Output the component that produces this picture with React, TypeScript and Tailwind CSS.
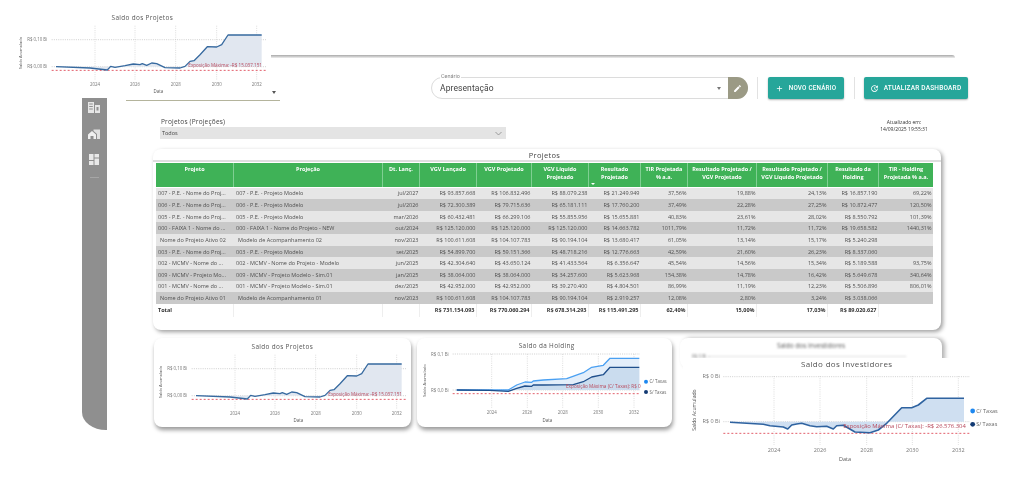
import React from "react";
import { MdAdd, MdEdit, MdUpdate } from "react-icons/md";

type Pt = [number, number];

const rows: string[][] = [
  ["007 - P.E. - Nome do Proj...", "007 - P.E. - Projeto Modelo", "jul/2027", "R$ 93.857.668", "R$ 106.832.496", "R$ 88.079.238", "R$ 21.249.949", "37,56%", "19,88%", "24,13%", "R$ 16.857.190", "69,22%"],
  ["006 - P.E. - Nome do Proj...", "006 - P.E. - Projeto Modelo", "jul/2026", "R$ 72.300.389", "R$ 79.715.636", "R$ 65.181.111", "R$ 17.760.200", "37,49%", "22,28%", "27,25%", "R$ 10.872.477", "120,50%"],
  ["005 - P.E. - Nome do Proj...", "005 - P.E. - Projeto Modelo", "mar/2026", "R$ 60.432.481", "R$ 66.299.106", "R$ 55.855.956", "R$ 15.655.881", "40,83%", "23,61%", "28,02%", "R$ 8.550.792", "101,39%"],
  ["000 - FAIXA 1 - Nome do ...", "000 - FAIXA 1 - Nome do Projeto - NEW", "out/2024", "R$ 125.120.000", "R$ 125.120.000", "R$ 125.120.000", "R$ 14.663.782", "1011,79%", "11,72%", "11,72%", "R$ 19.658.582", "1440,31%"],
  [" Nome do Projeto Ativo 02", " Modelo de Acompanhamento 02", "nov/2023", "R$ 100.611.608", "R$ 104.107.783", "R$ 90.194.104", "R$ 13.680.417", "61,05%", "13,14%", "15,17%", "R$ 5.240.298", ""],
  ["003 - P.E. - Nome do Proj...", "003 - P.E. - Projeto Modelo", "set/2025", "R$ 54.899.700", "R$ 59.151.366", "R$ 48.718.216", "R$ 12.776.663", "42,59%", "21,60%", "26,23%", "R$ 8.337.060", ""],
  ["002 - MCMV - Nome do ...", "002 - MCMV - Nome do Projeto - Modelo", "jun/2025", "R$ 42.304.640", "R$ 43.650.124", "R$ 41.433.564", "R$ 6.356.647", "45,54%", "14,56%", "15,34%", "R$ 5.189.588", "93,75%"],
  ["009 - MCMV - Projeto Mo...", "009 - MCMV - Projeto Modelo - Sim.01", "jan/2025", "R$ 38.064.000", "R$ 38.064.000", "R$ 34.257.600", "R$ 5.623.968", "154,38%", "14,78%", "16,42%", "R$ 5.649.678", "340,64%"],
  ["001 - MCMV - Nome do ...", "001 - MCMV - Projeto Modelo - Sim.01", "dez/2025", "R$ 42.952.000", "R$ 42.952.000", "R$ 39.270.400", "R$ 4.804.501", "86,99%", "11,19%", "12,23%", "R$ 5.506.896", "806,01%"],
  [" Nome do Projeto Ativo 01", " Modelo de Acompanhamento 01", "nov/2023", "R$ 100.611.608", "R$ 104.107.783", "R$ 90.194.104", "R$ 2.919.257", "12,08%", "2,80%", "3,24%", "R$ 3.038.066", ""],
];
const total = ["Total", "", "", "R$ 731.154.093", "R$ 770.060.294", "R$ 678.314.293", "R$ 115.491.295", "62,40%", "15,00%", "17,03%", "R$ 89.020.627", ""];
const headers = ["Projeto", "Projeção", "Dt. Lanç.", "VGV Lançado", "VGV Projetado", "VGV Líquido\nProjetado", "Resultado\nProjetado", "TIR Projetada\n% a.a.", "Resultado Projetado /\nVGV Projetado", "Resultado Projetado /\nVGV Líquido Projetado", "Resultado da\nHolding", "TIR - Holding\nProjetada % a.a."];
const gridCols = "grid grid-cols-[78px_149px_37px_57px_55px_57px_52px_47px_69px_71px_51px_54px]";

const projectLine: Pt[] = [[168,201],[270,205],[322,211],[332,200],[345,203],[375,198],[400,193],[420,195],[427,192],[440,197],[455,190],[470,192],[495,204],[540,205],[555,200],[570,185],[582,183],[600,165],[622,141],[650,142],[665,135],[684,106],[785,106]];
const holdingLight: Pt[] = [[140,180],[240,180],[295,180],[320,165],[345,156],[365,157],[370,153],[400,150],[470,146],[495,137],[520,128],[545,112],[580,106],[600,85],[688,85]];
const holdingDark: Pt[] = [[140,180],[240,181],[295,184],[320,175],[345,168],[365,169],[370,165],[400,165],[490,164],[520,155],[545,141],[580,134],[600,112],[688,112]];
const investorLine: Pt[] = [[180,277],[280,283],[300,287],[340,291],[353,297],[365,285],[380,282],[395,280],[420,287],[440,290],[470,289],[490,297],[500,287],[520,286],[555,306],[600,308],[625,300],[650,280],[695,233],[725,233],[745,225],[770,205],[882,205]];

type ChartProps = {
  w: number; h: number; dx: number; dy: number; title: string; titleZ: Pt; titleSize: number;
  yLabels: { z: number; t: string }[]; labelEnd: number; gridL: number; gridR: number;
  years: number[]; vTop: number; vBottom: number; yearY: number; dataXY: Pt; axisX: number; axisY: number;
  redY: number; redText: string; redZ: Pt; redSize: number; tick: number; stroke: number;
  areas: { pts: Pt[]; base: number; fill: string }[];
  lines: { pts: Pt[]; color: string }[];
  legend?: { x: number; y: number; color: string; t: string }[];
};

function Chart(c: ChartProps) {
  const X = (z: number) => z / 3 - c.dx;
  const Y = (z: number) => z / 3 - c.dy;
  const P = (a: Pt[]) => a.map(([x, y]) => `${X(x).toFixed(1)},${Y(y).toFixed(1)}`).join(" ");
  const labels = ["2024", "2026", "2028", "2030", "2032"];
  return (
    <svg width={c.w} height={c.h} viewBox={`0 0 ${c.w} ${c.h}`} className="block" fontFamily="'Open Sans', sans-serif">
      <text x={X(c.titleZ[0])} y={Y(c.titleZ[1]) + 2.5} fontSize={c.titleSize} fill="#555" textAnchor="middle" letterSpacing="0.35">{c.title}</text>
      {c.years.map((z) => (
        <line key={z} x1={X(z)} x2={X(z)} y1={Y(c.vTop)} y2={Y(c.vBottom)} stroke="#d5d5d5" strokeWidth="0.8" strokeDasharray="1 1.2" />
      ))}
      {c.yLabels.map((l) => (
        <g key={l.z}>
          <line x1={X(c.gridL)} x2={X(c.gridR)} y1={Y(l.z)} y2={Y(l.z)} stroke="#c4c4c4" strokeWidth="0.8" strokeDasharray="1 1.2" />
          <text x={X(c.labelEnd)} y={Y(l.z) + 1.7} fontSize={c.tick} fill="#777" textAnchor="end">{l.t}</text>
        </g>
      ))}
      {c.areas.map((a, i) => (
        <polygon key={i} fill={a.fill} points={`${P(a.pts)} ${X(a.pts[a.pts.length - 1][0])},${Y(a.base)} ${X(a.pts[0][0])},${Y(a.base)}`} />
      ))}
      <line x1={X(c.gridL)} x2={X(c.gridR)} y1={Y(c.redY)} y2={Y(c.redY)} stroke="#e2606c" strokeWidth="1" strokeDasharray="2 2" />
      {c.lines.map((l, i) => (
        <polyline key={i} points={P(l.pts)} fill="none" stroke={l.color} strokeWidth={c.stroke} strokeLinejoin="round" />
      ))}
      <text x={X(c.redZ[0])} y={Y(c.redZ[1]) + 1.7} fontSize={c.redSize} fill="#b8475a">{c.redText}</text>
      {c.years.map((z, i) => (
        <text key={z} x={X(z)} y={Y(c.yearY) + 1.7} fontSize={c.tick} fill="#777" textAnchor="middle">{labels[i]}</text>
      ))}
      <text x={X(c.dataXY[0])} y={Y(c.dataXY[1]) + 1.7} fontSize={c.tick} fill="#555" textAnchor="middle">Data</text>
      <text transform={`translate(${X(c.axisX) + 1.5} ${Y(c.axisY)}) rotate(-90)`} fontSize={c.tick - 0.4} fill="#555" textAnchor="middle">Saldo Acumulado</text>
      {c.legend?.map((l) => (
        <g key={l.t}>
          <circle cx={X(l.x)} cy={Y(l.y)} r={c.tick === 5.5 ? 2.4 : 2} fill={l.color} />
          <text x={X(l.x) + 3.5} y={Y(l.y) + 1.7} fontSize={c.tick} fill="#666">{l.t}</text>
        </g>
      ))}
    </svg>
  );
}

function ProjectChart() {
  return (
    <Chart
      w={257} h={89} dx={14} dy={9.3} title="Saldo dos Projetos" titleZ={[427, 52]} titleSize={6.4}
      yLabels={[{ z: 120, t: "R$ 0,10 Bi" }, { z: 201, t: "R$ 0,00 Bi" }]} labelEnd={142} gridL={155} gridR={798}
      years={[285, 405, 527, 650, 770]} vTop={78} vBottom={240} yearY={255} dataXY={[475, 276]} axisX={62} axisY={160}
      redY={212} redText="Exposição Máxima: -R$ 15.037.151" redZ={[565, 197]} redSize={4.6} tick={4.4} stroke={1.3}
      areas={[{ pts: projectLine, base: 201, fill: "#e1e7f0" }]} lines={[{ pts: projectLine, color: "#36699f" }]}
    />
  );
}

function HoldingChart() {
  return (
    <Chart
      w={255} h={89} dx={7} dy={8} title="Saldo da Holding" titleZ={[410, 46]} titleSize={6.4}
      yLabels={[{ z: 72, t: "R$ 0,1 Bi" }, { z: 180, t: "R$ 0,0 Bi" }]} labelEnd={116} gridL={128} gridR={690}
      years={[245, 352, 458, 565, 672]} vTop={72} vBottom={235} yearY={248} dataXY={[412, 270]} axisX={44} axisY={152}
      redY={191} redText="Exposição Máxima (C/ Taxas): R$ 0" redZ={[468, 168]} redSize={4.7} tick={4.4} stroke={1.3}
      areas={[{ pts: holdingLight, base: 180, fill: "#e3eefa" }, { pts: holdingDark, base: 180, fill: "#cadcee" }]}
      lines={[{ pts: holdingLight, color: "#4aa0f2" }, { pts: holdingDark, color: "#1f4f8c" }]}
      legend={[{ x: 708, y: 155, color: "#1e88f0", t: "C/ Taxas" }, { x: 708, y: 186, color: "#123a73", t: "S/ Taxas" }]}
    />
  );
}

function InvestorChart() {
  return (
    <Chart
      w={335} h={110} dx={13} dy={28} title="Saldo dos Investidores" titleZ={[530, 104]} titleSize={8}
      yLabels={[{ z: 140, t: "R$ 0 Bi" }, { z: 275, t: "R$ 0 Bi" }]} labelEnd={150} gridL={160} gridR={900}
      years={[312, 450, 590, 727, 865]} vTop={138} vBottom={345} yearY={362} dataXY={[525, 388]} axisX={72} axisY={240}
      redY={310} redText="Exposição Máxima (C/ Taxas): -R$ 26.576.304" redZ={[520, 290]} redSize={5.9} tick={5.5} stroke={1.6}
      areas={[{ pts: investorLine, base: 275, fill: "#cfdff1" }]} lines={[{ pts: investorLine, color: "#2f63a0" }]}
      legend={[{ x: 908, y: 243, color: "#1e88f0", t: "C/ Taxas" }, { x: 908, y: 283, color: "#123a73", t: "S/ Taxas" }]}
    />
  );
}

function Sidebar() {
  return (
    <aside className="mt-[96px] ml-[82px] w-[24.5px] h-[334px] shrink-0 bg-[#8f8f8f] rounded-bl-[24px_18px] flex flex-col items-center pt-[6px] gap-[14px]">
      <svg width="12" height="11" viewBox="0 0 12 11" fill="#e6e6e6">
        <path d="M0 0h6v11H0z M1.2 1.5v1h3.6v-1z M1.2 4v1h3.6V4z M1.2 6.500v1h3.6v-1z" fillRule="evenodd" />
        <path d="M7 3h5v8H7z M8.500 5v3.500h2V5z" fillRule="evenodd" />
      </svg>
      <svg width="12" height="11" viewBox="0 0 12 11" fill="#f0f0f0" className="mt-[1px]">
        <path d="M0 11V6.500L4 3l4 3.500V11H5.500V8h-3v3z" />
        <path d="M5.500 1.500H12V11H9V6L5.500 3z" opacity=".85" />
      </svg>
      <svg width="10" height="11" viewBox="0 0 10 11" fill="#e8e8e8" className="mt-[1px]">
        <path d="M0 0h4.500v6H0z M5.500 0H10v3.500H5.500z M5.500 4.500H10V11H5.500z M0 7h4.500v4H0z" />
      </svg>
      <div className="w-[9px] h-[1px] bg-[#a6a6a6] -mt-[2px]" />
    </aside>
  );
}

function ScenarioBar() {
  return (
    <div className="mt-[19px] ml-[324.500px] flex items-center h-[22px]" style={{ fontFamily: "Roboto, sans-serif" }}>
      <div className="relative w-[316.500px] h-[22px] flex items-center rounded-full border border-[#dcdcdc] bg-white overflow-visible">
        <span className="absolute -top-[6px] left-[8px] bg-white px-[1px] text-[5.500px] leading-[8px] text-[#888]">Cenário</span>
        <span className="flex-1 pl-[8px] pt-[1px] text-[8.500px] tracking-[0.1px] text-[#444]">Apresentação</span>
        <span className="mr-[7px] w-0 h-0 border-x-[2.500px] border-x-transparent border-t-[3px] border-t-[#777]" />
        <span className="w-[19.500px] h-[22px] -mr-[1px] -my-[1px] rounded-r-full bg-[#9b9a85] flex items-center justify-center text-white">
          <MdEdit size={9} />
        </span>
      </div>
      <div className="ml-[9px] w-[1px] h-[22px] bg-[#e2e2e2]" />
      <button className="ml-[10px] w-[76px] h-[22px] pt-[1px] rounded-[2px] bg-[#26a69a] shadow-[0_1px_2px_rgba(0,0,0,.3)] text-white flex items-center justify-center gap-[5px] text-[6.300px] font-medium tracking-[0.2px]">
        <MdAdd size={9} />
        NOVO CENÁRIO
      </button>
      <div className="ml-[10px] w-[1px] h-[22px] bg-[#e2e2e2]" />
      <button className="ml-[9px] w-[104px] h-[22px] pt-[1px] rounded-[2px] bg-[#26a69a] shadow-[0_1px_2px_rgba(0,0,0,.3)] text-white flex items-center justify-center gap-[5px] text-[6.500px] font-medium tracking-[0.2px]">
        <MdUpdate size={9} />
        ATUALIZAR DASHBOARD
      </button>
    </div>
  );
}

function FilterRow() {
  return (
    <div className="mt-[17px] ml-[53.500px] w-[774px] h-[24px] flex justify-between items-start" style={{ fontFamily: "'Open Sans', sans-serif" }}>
      <div className="w-[346px]">
        <div className="pl-[1px] text-[6.500px] leading-[11px] tracking-[0.2px] text-[#444]">Projetos (Projeções)</div>
        <div className="h-[12px] bg-[#e4e4e4] flex items-center justify-between pl-[2px] pr-[4px] text-[5.500px] text-[#444]">
          Todos
          <svg width="7" height="5" viewBox="0 0 7 5" fill="none" stroke="#888" strokeWidth=".8"><path d="M.5 1l3 3 3-3" /></svg>
        </div>
      </div>
      <div className="w-[60px] text-center text-[5px] leading-[7px] text-[#333] mt-[3px]">
        Atualizado em:<br />14/09/2025 19:55:31
      </div>
    </div>
  );
}

function ProjectsTable() {
  return (
    <section className="mt-[9px] ml-[46.500px] w-[788px] h-[181px] rounded-[8px] bg-white shadow-[2px_2px_4px_rgba(0,0,0,.38)] pt-[2px] pl-[3px]" style={{ fontFamily: "'Open Sans', sans-serif" }}>
      <div className="w-[777px] text-center text-[7.500px] leading-[9px] tracking-[0.3px] text-[#444]">Projetos</div>
      <div className="-ml-[3px] w-[788px] h-[2px] bg-[#dedede]" />
      <div className="w-[777px] mt-[1px] text-[5.500px]">
        <div className={`${gridCols} h-[24px] bg-[#3fb257] text-white font-bold leading-[7.500px]`}>
          {headers.map((h, i) => (
            <div key={h} className="flex justify-center items-start pt-[3px] text-center whitespace-pre-line border-r border-[#7fcf92] last:border-r-0 relative">
              <span>{h}</span>
              {i === 6 && <span className="absolute left-[2px] bottom-[2px] w-0 h-0 border-x-[2px] border-x-transparent border-t-[2.500px] border-t-white" />}
            </div>
          ))}
        </div>
        <div className="h-[0.500px]" />
        {rows.map((r, ri) => (
          <div key={ri} className={`${gridCols} h-[11.650px] items-center leading-[8px] text-[#505050] ${ri % 2 === 0 ? "bg-[#e6e6e6]" : "bg-[#c9c9c9]"}`}>
            {r.map((v, i) => (
              <div key={i} className={`whitespace-nowrap overflow-hidden ${i < 2 ? "pl-[2px]" : "text-right pr-[1.500px]"} ${v.startsWith(" ") ? "pl-[4px]" : ""}`}>{v.trim()}</div>
            ))}
          </div>
        ))}
        <div className={`${gridCols} h-[13px] mt-[0.500px] items-center font-bold text-[#333]`}>
          {total.map((v, i) => (
            <div key={i} className={`whitespace-nowrap ${i < 2 ? "pl-[2px]" : "text-right pr-[1.500px]"} border-r border-[#eeeeee] last:border-r-0 h-full leading-[13px]`}>{v}</div>
          ))}
        </div>
      </div>
    </section>
  );
}

function ChartsRow() {
  return (
    <div className="mt-[8px] ml-[47.500px] flex items-start h-[89px]">
      <div className="w-[257px] h-[89px] rounded-[8px] bg-white shadow-[1px_3px_4px_rgba(0,0,0,.4)]"><ProjectChart /></div>
      <div className="ml-[6px] w-[255px] h-[89px] rounded-[8px] bg-white shadow-[1px_3px_4px_rgba(0,0,0,.4)]"><HoldingChart /></div>
      <div className="ml-[8px] w-[262px] h-[30px] rounded-[8px] bg-white shadow-[3px_0_4px_rgba(0,0,0,.3)] pt-[3px] text-center" style={{ fontFamily: "'Open Sans', sans-serif" }}>
        <div className="blur-[1px] text-[6.500px] leading-[9px] text-[#555]">Saldo dos Investidores</div>
        <div className="mt-[3px] ml-[12px] mr-[36px] flex items-center gap-[2px] blur-[1px]">
          <span className="text-[4.500px] text-[#777]">R$ 0 Bi</span>
          <div className="flex-1 border-t border-dotted border-[#bbb]" />
        </div>
      </div>
    </div>
  );
}

export default function App() {
  return (
    <div className="relative w-[1018px] h-[482px] overflow-hidden bg-white flex items-start blur-[0.350px]">
      <Sidebar />
      <main className="flex-1 flex flex-col pt-[55px]">
        <div className="ml-[163.500px] w-[685px] h-[3px] rounded-tr-[6px] bg-gradient-to-b from-[#a8a8a8] to-[#efefef]" />
        <ScenarioBar />
        <FilterRow />
        <ProjectsTable />
        <ChartsRow />
      </main>

      {/* floating excerpt, top left */}
      <div className="absolute left-[14px] top-[9.300px] w-[257px] h-[89px] bg-white rounded-[8px]">
        <ProjectChart />
      </div>
      <div className="absolute left-[126px] top-[99.500px] w-[154px] h-[1px] bg-[#b4b49c]" />
      <div className="absolute left-[272px] top-[90.500px] w-0 h-0 border-x-[2.500px] border-x-transparent border-t-[3px] border-t-[#555]" />

      {/* floating excerpt, bottom right */}
      <div className="absolute left-[683px] top-[358px] w-[335px] h-[110px] bg-white rounded-tl-[8px]">
        <InvestorChart />
      </div>
    </div>
  );
}
